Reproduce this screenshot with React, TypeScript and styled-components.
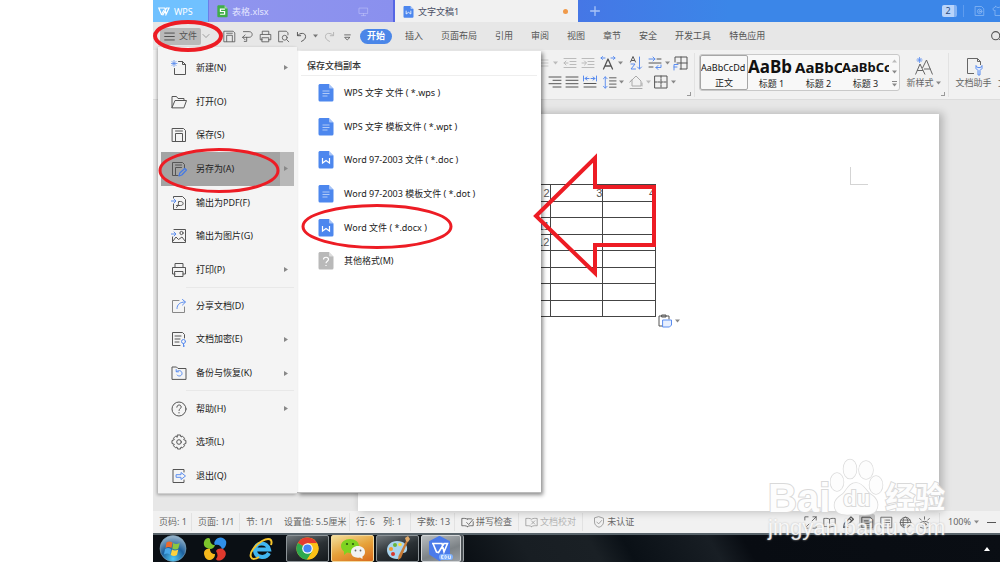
import React from "react";
import styled, { createGlobalStyle, css } from "styled-components";

const GlobalStyle = createGlobalStyle`
  * { box-sizing: border-box; }
  body {
    margin: 0;
    background: #fff;
    font-family: "Noto Sans", "Noto Sans CJK SC", sans-serif;
    font-size: 9px;
    line-height: 12px;
    color: #333;
    overflow: hidden;
  }
  button {
    font: inherit;
    color: inherit;
    border: 0;
    padding: 0;
    background: none;
    white-space: nowrap;
  }
  svg { display: block; flex: none; }
`;

const Screen = styled.div`
  padding-left: 153px;
`;

const Desktop = styled.div`
  position: relative;
  display: flex;
  flex-direction: column;
  min-height: 100vh;
  overflow: hidden;
`;

/* ---------- title bar ---------- */

const TitleBar = styled.header`
  display: flex;
  height: 22px;
  background: linear-gradient(90deg, #4b6ee4 40%, #3b86e8 68%);
  color: #fff;
`;

const TitleTab = styled.button<{ $width: number; $kind: "home" | "idle" | "active" }>`
  display: flex;
  align-items: center;
  gap: 4px;
  width: ${(p) => p.$width}px;
  padding: 1px 8px 0 8px;
  flex: none;
  ${(p) => p.$kind === "home" && css`background: #70c1ff; color: #fff; padding-left: 5px;`}
  ${(p) => p.$kind === "idle" && css`
    background: linear-gradient(90deg, #9095ee, #8a90ee);
    border-left: 1px solid #6a7ee8;
    border-right: 2px solid #5566e4;
    color: #e4e6ff;
  `}
  ${(p) => p.$kind === "active" && css`background: #f1f1f1; color: #4b4f66;`}
`;

const TabText = styled.span`
  flex: 1;
  text-align: left;
`;

const TabGap = styled.span`
  width: 12px;
`;

const UnsavedDot = styled.span`
  width: 5px;
  height: 5px;
  margin-right: 2px;
  border-radius: 50%;
  background: #f09a4a;
`;

const NewTab = styled.button`
  width: 34px;
  display: grid;
  place-items: center;
`;

const TitleTools = styled.div`
  display: flex;
  align-items: center;
  gap: 6px;
  margin-left: auto;
  margin-right: -4px;
`;

const TabCount = styled.button`
  width: 15px;
  height: 12px;
  border-right: 3px solid #86b4f3;
  border-radius: 2px;
  background: #b9d4fa;
  color: #2c4b7c;
`;

const TitleRule = styled.span`
  width: 1px;
  height: 12px;
  margin-right: 4px;
  background: #5f9cee;
`;

/* ---------- menu bar ---------- */

const MenuBar = styled.nav`
  display: flex;
  align-items: center;
  height: 28px;
  padding-left: 7px;
  background: #e7e7e7;
  color: #555;
`;

const FileButton = styled.button`
  display: flex;
  align-items: center;
  gap: 4px;
  width: 41px;
  height: 17px;
  padding-left: 4px;
  border-radius: 2px;
  background: #b9b9b9;
`;

const FileMore = styled.button`
  width: 16px;
`;

const QuickTools = styled.div`
  display: flex;
  align-items: center;
  gap: 5px;
  width: 159px;
  padding-left: 1px;
`;

const StartTab = styled.button`
  width: 32px;
  height: 15px;
  border-radius: 8px;
  background: #4a86e8;
  color: #fff;
  font-weight: 700;
`;

const MenuTabs = styled.div`
  display: flex;
  gap: 18px;
  margin-left: 13px;
`;

const SearchButton = styled.button`
  margin-left: auto;
  margin-right: -3px;
`;

/* ---------- ribbon ---------- */

const Ribbon = styled.section`
  display: flex;
  height: 50px;
  padding-left: 386px;
  background: #f1f1f1;
  border-bottom: 1px solid #dcdcdc;
  color: #666;
  overflow: hidden;
`;

const ParagraphGroup = styled.div`
  display: flex;
  flex-direction: column;
  gap: 3px;
  width: 154px;
  padding-top: 5px;
  flex: none;
`;

const ToolRow = styled.div<{ $start?: number }>`
  display: flex;
  align-items: center;
  gap: 2px;
  padding-left: ${(p) => p.$start ?? 0}px;
`;

const RibbonRule = styled.span`
  width: 1px;
  height: 44px;
  margin-top: 3px;
  background: #e2e2e2;
  flex: none;
`;

const Gallery = styled.div`
  display: flex;
  width: 201px;
  height: 37px;
  margin: 4px 0 0 4px;
  border: 1px solid #c9c9c9;
  border-radius: 3px;
  background: #f8f8f8;
  flex: none;
`;

const StyleCard = styled.button<{ $selected?: boolean }>`
  display: flex;
  flex-direction: column;
  align-items: center;
  justify-content: space-between;
  width: ${(p) => (p.$selected ? 48 : 47)}px;
  color: #222;
  overflow: hidden;
  ${(p) => p.$selected && css`border: 1px solid #a6a6a6; border-radius: 2px;`}
`;

const Sample = styled.span<{ $size: number; $bold?: boolean }>`
  height: 22px;
  line-height: 24px;
  width: 100%;
  overflow: hidden;
  text-align: left;
  color: #111;
  font-size: ${(p) => p.$size}px;
  font-weight: ${(p) => (p.$bold ? 700 : 400)};
`;

const GalleryArrows = styled.div`
  display: flex;
  flex-direction: column;
  justify-content: space-around;
  align-items: center;
  flex: 1;
`;

const BigTool = styled.button<{ $width: number }>`
  display: flex;
  flex-direction: column;
  align-items: center;
  justify-content: center;
  gap: 1px;
  width: ${(p) => p.$width}px;
  padding-bottom: 4px;
  flex: none;
`;

const NextTool = styled.button`
  align-self: flex-end;
  margin-bottom: 10px;
`;

const BigToolText = styled.span`
  display: flex;
  align-items: center;
  gap: 2px;
`;

const GroupCorner = styled.span`
  align-self: flex-end;
  width: 4px;
  height: 4px;
  margin: 0 3px 3px -6px;
  border-right: 1px solid #999;
  border-bottom: 1px solid #999;
  flex: none;
`;

/* ---------- document ---------- */

const Workspace = styled.main`
  display: flex;
  flex: 1;
  min-height: 411px;
  background: #e7e7e7;
`;

const Paper = styled.article`
  position: relative;
  flex: 1;
  margin: 14px 61px 0 205px;
  padding: 70px 70px 0 86px;
  background: #fff;
  box-shadow: 3px 0 8px 1px rgba(0, 0, 0, 0.22);
`;

const MarginCorner = styled.span`
  position: absolute;
  top: 53px;
  right: 71px;
  width: 18px;
  height: 18px;
  border-left: 1px solid #d4d4d4;
  border-bottom: 1px solid #d4d4d4;
`;

const DataTable = styled.table`
  width: 212px;
  height: 133px;
  table-layout: fixed;
  border-collapse: collapse;
  font: 11px/14px "Liberation Sans", sans-serif;
  color: #555;
  td {
    height: 16px;
    border: 1px solid #444;
    padding: 0;
    text-align: right;
  }
`;

const PasteOptions = styled.button`
  display: flex;
  align-items: center;
  gap: 2px;
  margin: -4px 0 0 213px;
`;

/* ---------- status bar ---------- */

const StatusBar = styled.footer`
  display: flex;
  align-items: center;
  height: 22px;
  padding: 0 4px 0 6px;
  background: #f1f1f1;
  color: #666;
  white-space: nowrap;
`;

const StatusItem = styled.span<{ $width: number; $rule?: boolean; $dim?: boolean }>`
  display: flex;
  align-items: center;
  gap: 2px;
  height: 18px;
  width: ${(p) => p.$width}px;
  margin-right: 6px;
  flex: none;
  border-right: ${(p) => (p.$rule ? "1px solid #e2e2e2" : "0")};
  color: ${(p) => (p.$dim ? "#b5b5b5" : "#666")};
`;

const ViewTools = styled.div`
  display: flex;
  align-items: center;
  gap: 3px;
  margin-left: auto;
`;

const ViewButton = styled.button<{ $on?: boolean }>`
  display: grid;
  place-items: center;
  width: 16px;
  height: 16px;
  border-radius: 2px;
  background: ${(p) => (p.$on ? "#c4c4c4" : "none")};
`;

const Zoom = styled.button`
  display: flex;
  align-items: center;
  gap: 3px;
  width: 45px;
  height: 18px;
  margin-left: 4px;
  padding-left: 8px;
  border-left: 1px solid #e2e2e2;
`;

/* ---------- taskbar ---------- */

const Taskbar = styled.footer`
  display: flex;
  align-items: center;
  gap: 2px;
  height: 29px;
  border-top: 2px solid #59646b;
  background: linear-gradient(60deg, #0a0f14 36%, #181e23 44%, #1a2025 52%, #0a1016 56%, #181e24 66%, #080c12 70%, #0a0e14);
`;

const Launcher = styled.button<{ $width: number }>`
  display: grid;
  place-items: center;
  width: ${(p) => p.$width}px;
  height: 27px;
`;

const TaskButton = styled.button<{ $look: "dark" | "orange" | "light" }>`
  display: grid;
  place-items: center;
  width: ${(p) => (p.$look === "light" ? 40 : 43)}px;
  height: 27px;
  border: 1px solid #8d9498;
  border-radius: 2px;
  ${(p) => p.$look === "dark" && css`background: linear-gradient(160deg, #70777b, #2b3135 50%, #14191d);`}
  ${(p) => p.$look === "orange" && css`background: linear-gradient(160deg, #f3df9a, #e6a23a 50%, #d96a1c); border-color: #f2d9a0;`}
  ${(p) => p.$look === "light" && css`background: linear-gradient(160deg, #b9bdc0, #7c8286 60%, #9ba0a4); border-color: #d2d5d7; box-shadow: 2px 0 0 #4c5256, 3px 0 0 #a0a5a8;`}
`;

const Tray = styled.button`
  margin-left: auto;
  margin-right: 10px;
`;

/* ---------- file menu ---------- */

const FileMenu = styled.div`
  position: absolute;
  z-index: 2;
  left: 5px;
  top: 47px;
  display: flex;
  flex-direction: column;
  width: 139px;
  height: 447px;
  padding: 4px 3px 0;
  background: #f4f4f4;
  border: solid #cfcfcf;
  border-width: 0 0 1px 0;
  box-shadow: -1px 1px 3px rgba(0, 0, 0, 0.3);
`;

const MenuRow = styled.button<{ $active?: boolean }>`
  display: flex;
  align-items: center;
  flex: 1;
  padding-left: 10px;
  color: #222;
  background: ${(p) => (p.$active ? "linear-gradient(90deg, #a3a3a3 119px, #b8b8b8 119px)" : "none")};
`;

const MenuLabel = styled.span`
  flex: 1;
  margin-left: 9px;
  text-align: left;
`;

const MenuArrow = styled.span`
  width: 10px;
  color: #888;
`;

const MenuRule = styled.hr`
  width: 108px;
  height: 2px;
  margin: 0 0 0 auto;
  border: 0;
  border-top: 1px solid #e8e8e8;
`;

const SaveAsMenu = styled.div`
  position: absolute;
  z-index: 1;
  left: 144px;
  top: 51px;
  width: 244px;
  height: 442px;
  background: #fff;
  border-bottom: 1px solid #bbb;
  box-shadow: 2px 2px 4px rgba(0, 0, 0, 0.45);
`;

const SaveAsTitle = styled.h2`
  margin: 0 4px;
  padding: 9px 0 3px 6px;
  border-bottom: 1px solid #eee;
  font-size: 9px;
  font-weight: 500;
  color: #333;
`;

const FormatList = styled.div`
  display: flex;
  flex-direction: column;
  height: 202px;
`;

const FormatRow = styled.button`
  display: flex;
  align-items: center;
  flex: 1;
  gap: 10px;
  padding-left: 21px;
  color: #222;
`;

/* ---------- overlays ---------- */

const Annotations = styled.svg`
  position: absolute;
  z-index: 3;
  left: 0;
  top: 0;
  pointer-events: none;
  overflow: visible;
`;

const Watermark = styled.div`
  position: absolute;
  z-index: 4;
  right: 53px;
  bottom: 22px;
  width: 179px;
  pointer-events: none;
  font-family: "Liberation Sans", "Noto Sans CJK SC", sans-serif;
  color: #fdfdfd;
  -webkit-text-stroke: 2px #d9d9d9;
  paint-order: stroke fill;
  white-space: nowrap;
`;

const Brand = styled.div`
  display: flex;
  align-items: flex-end;
  font-size: 40px;
  line-height: 36px;
  font-weight: 700;
`;

const Paw = styled.div`
  position: relative;
  width: 54px;
  height: 58px;
  margin-right: 1px;
`;

const PawText = styled.span`
  position: absolute;
  left: 13px;
  bottom: 5px;
  font-size: 22px;
  line-height: 24px;
`;

const BrandCjk = styled.span`
  font-size: 30px;
`;

const SiteName = styled.div`
  font-size: 22px;
  line-height: 24px;
  color: rgba(255, 255, 255, 0.85);
  -webkit-text-stroke: 0;
  text-shadow: 0 0 2px #bbb;
`;

/* ---------- drawings ---------- */

const B = "#5b8def";

type IconProps = { size?: number; color?: string; children: React.ReactNode };

const Icon = ({ size = 16, color = "#555", children }: IconProps) => (
  <svg width={size} height={size} viewBox="0 0 16 16" fill="none" stroke={color} strokeWidth="1" strokeLinecap="round" strokeLinejoin="round" aria-hidden="true">
    {children}
  </svg>
);

const Caret = ({ color = "#888" }: { color?: string }) => (
  <svg width="5" height="4" viewBox="0 0 5 4" aria-hidden="true"><path d="M0 .5h5L2.500 3.500z" fill={color} /></svg>
);

const floppy = <><path d="M1.500 1.500h11l2 2v11h-13z" /><path d="M4.500 14V6.500h7V14M4.500 4h7" /></>;
const printer = <><path d="M4 5V1.500h8V5M4 12H1.500V5.500h13V12H12" /><path d="M4 9.500h8v5H4z" /></>;

const menuIcons: Record<string, React.ReactNode> = {
  new: <><path d="M7.500 1.500h4l3 3v10h-11V8.500" /><path d="M11.500 1.500v3h3" /><path d="M3 .5v6M0 3.500h6M1 1.500l4 4M5 1.500l-4 4" stroke={B} strokeWidth=".8" /></>,
  open: <path d="M1 13.500v-11h4.500L7 4.500h6v2M1 13.500L4 6.500h11.500l-2.500 7z" />,
  save: floppy,
  saveAs: <><path d="M7 14.500H1.500v-13h10l2 2V7" /><path d="M4.500 14V6.500h6M4.500 4h6" /><path d="M8 15l.8-3 5-4.500 1.700 1.500-4.700 5z" stroke="#4379e6" strokeWidth="1.200" /></>,
  pdf: <><path d="M2.500 9v5.500h12v-10l-3-3h-9V3" /><path d="M5.500 12.500c2-1 2-3.500 2-6h2c3.500 0 3.500 4 0 4H5.500" /><path d="M0 6h4.500M3 4l2 2-2 2" stroke={B} /></>,
  image: <><path d="M3 1.500h11.500v13h-13V9M2 13l3-4 2.500 2.500L11 9l3 4" /><circle cx="10.500" cy="5" r="1.600" /><path d="M0 6h4.500M3 4l2 2-2 2" stroke={B} /></>,
  print: printer,
  share: <><path d="M8 2.500H1.500v12h12V9" stroke="#888" /><path d="M6 10.500c0-4 3-6.500 8-6.500M11.500 1.500L14.500 4l-3 3" stroke={B} /></>,
  lock: <><path d="M9 14.500H1.500v-13h10l2 2V7M4 5h6M4 8h5M4 11h4" /><circle cx="12.500" cy="10.500" r="2" stroke={B} /><path d="M12.500 12.500v3M12.500 15h1" stroke={B} /></>,
  backup: <><path d="M1 14V2h4.500L7 3.500h8V14z" /><path d="M5.500 6.500c3-2 5.500-.5 5.500 2s-3.500 3.500-5 1.500M5.200 4.500v2.300h2.300" stroke={B} /></>,
  help: <><circle cx="8" cy="8" r="7" /><path d="M5.800 6.200c0-3 4.400-3 4.400-.2 0 1.600-2.200 1.700-2.200 3.500M8 11.500v.5" /></>,
  options: <><circle cx="8" cy="8" r="2.300" /><path d="M6.500 1h3l.5 2 1.500-.8 2 2-.8 1.500 2.200.8v3l-2.200.8.8 1.500-2 2-1.500-.8-.5 2h-3L6 13l-1.500.8-2-2 .8-1.500L1 9.500v-3l2.300-.8-.8-1.500 2-2L6 3z" /></>,
  exit: <><path d="M13 4V1.500H2v13h11V12" /><path d="M5.500 6.700H10V4.500L14.500 8 10 11.500V9.300H5.500z" stroke={B} /></>,
};

const DocIcon = ({ kind, w = 16, h = 18 }: { kind: "lines" | "w" | "unknown" | "s"; w?: number; h?: number }) => (
  <svg width={w} height={h} viewBox="0 0 16 18" aria-hidden="true">
    <path d="M1.500 0H11l4.500 4.500V16a1.500 1.500 0 0 1-1.500 1.500H2A1.500 1.500 0 0 1 .5 16V1z" fill={kind === "unknown" ? "#b9b9b9" : kind === "s" ? "#3fae49" : "#4d87ee"} />
    <path d="M11 0l4.500 4.500H12a1 1 0 0 1-1-1z" fill="#fff" opacity=".5" />
    <g fill="none" stroke="#fff" strokeWidth="1.200">
      {kind === "lines" && <path d="M4.500 7h7M4.500 9.500h7M4.500 12h5" strokeWidth=".8" opacity=".7" />}
      {kind === "w" && <path d="M4.500 7v5L8 9.500l3.500 2.500V7" />}
      {kind === "unknown" && <path d="M5.500 7.500c0-3 5-3 5 0 0 1.700-2.500 1.800-2.500 3.800M8 13v1" />}
      {kind === "s" && <path d="M11.500 5.500H5v3.500h6v4H4.500" strokeWidth="1.800" />}
    </g>
  </svg>
);

const menu: { id: string; label: string; sub?: boolean; rule?: boolean }[] = [
  { id: "new", label: "新建(N)", sub: true },
  { id: "open", label: "打开(O)" },
  { id: "save", label: "保存(S)" },
  { id: "saveAs", label: "另存为(A)", sub: true },
  { id: "pdf", label: "输出为PDF(F)" },
  { id: "image", label: "输出为图片(G)" },
  { id: "print", label: "打印(P)", sub: true },
  { id: "share", label: "分享文档(D)", rule: true },
  { id: "lock", label: "文档加密(E)", sub: true },
  { id: "backup", label: "备份与恢复(K)", sub: true },
  { id: "help", label: "帮助(H)", sub: true, rule: true },
  { id: "options", label: "选项(L)" },
  { id: "exit", label: "退出(Q)" },
];

const formats: { kind: "lines" | "w" | "unknown"; label: string }[] = [
  { kind: "lines", label: "WPS 文字 文件 ( *.wps )" },
  { kind: "lines", label: "WPS 文字 模板文件 ( *.wpt )" },
  { kind: "w", label: "Word 97-2003 文件 ( *.doc )" },
  { kind: "lines", label: "Word 97-2003 模板文件 ( *.dot )" },
  { kind: "w", label: "Word 文件 ( *.docx )" },
  { kind: "unknown", label: "其他格式(M)" },
];

const tabs = ["插入", "页面布局", "引用", "审阅", "视图", "章节", "安全", "开发工具", "特色应用"];

const cells = [
  ["", "2", "3", "4"],
  ["", "", "", ""],
  ["", "11", "", ""],
  ["", "12", "", ""],
  ["", "", "", ""],
  ["", "", "", ""],
  ["", "", "", ""],
  ["", "", "", ""],
];

const indent = (flip: boolean) => (
  <><path d="M2 3.500h12M8 6.500h6M8 9.500h6M2 12.500h12" /><path d={flip ? "M2 8h4M4.500 6L6.500 8l-2 2" : "M6 8H2M4 6L2 8l2 2"} /></>
);

export default function App() {
  return (
    <>
      <GlobalStyle />
      <Screen>
        <Desktop>
          <TitleBar>
            <TitleTab $width={55} $kind="home">
              <svg width="12" height="9" viewBox="0 0 12 9" fill="none" stroke="#fff" strokeWidth="1.200"><path d="M.8 1h6L8 7.500 11 1H8.500L5 7.800 3.500 7.500z" /><path d="M3.500 7.500L6 3" /></svg>
              WPS
            </TitleTab>
            <TitleTab $width={187} $kind="idle">
              <DocIcon kind="s" w={11} h={13} />
              <TabText>表格.xlsx</TabText>
              <Icon size={11} color="#b9bdf7"><path d="M2 3h12v8H2zM8 11v3M5 14h6" /></Icon>
              <TabGap />
            </TitleTab>
            <TitleTab $width={183} $kind="active">
              <DocIcon kind="w" w={11} h={12} />
              <TabText>文字文稿1</TabText>
              <UnsavedDot />
            </TitleTab>
            <NewTab aria-label="新建标签"><Icon size={14} color="#a9c4f7"><path d="M8 3v10M3 8h10" strokeWidth="1.500" /></Icon></NewTab>
            <TitleTools>
              <TabCount>2</TabCount>
              <TitleRule />
              <Icon size={12} color="#8db9f4"><path d="M2 2h8l3 3v9H2z" /><circle cx="7.500" cy="8.500" r="3" /><circle cx="7.500" cy="8.500" r="1" /></Icon>
              <Icon size={12} color="#8db9f4"><path d="M5 2L1 5l2 3 1-1v7h8V7l1 1 2-3-4-3c-1 2-5 2-6 0z" /></Icon>
            </TitleTools>
          </TitleBar>

          <MenuBar>
            <FileButton>
              <Icon size={11} color="#444"><path d="M1 3h14M1 8h14M1 13h14" strokeWidth="1.300" /></Icon>
              文件
            </FileButton>
            <QuickTools>
              <FileMore aria-label="更多"><Icon size={8}><path d="M2 5l6 6 6-6" /></Icon></FileMore>
              <Icon size={13}>{floppy}</Icon>
              <Icon size={13}><path d="M3 2h7c5 0 5 7 0 7H2M5 6L2 9l3 3M7 9v5H4" /></Icon>
              <Icon size={13}>{printer}</Icon>
              <Icon size={13}><path d="M7 14.500H2v-13h9.500l2 2V6" /><circle cx="9.500" cy="9.500" r="3" /><path d="M12 12l2.500 2.500" /></Icon>
              <Icon size={13}><path d="M3 3v4h4M3 7c3-4 10-4 10 1 0 3-2 4.500-5 6" strokeWidth="1.200" /></Icon>
              <Caret color="#777" />
              <Icon size={13} color="#b5b5b5"><path d="M13 3v4H9M13 7C10 3 3 3 3 8c0 3 2 4.500 5 6" strokeWidth="1.200" /></Icon>
              <Icon size={13}><path d="M4.500 6h7M5 9h6l-3 3z" /></Icon>
            </QuickTools>
            <StartTab>开始</StartTab>
            <MenuTabs>{tabs.map((t) => <button key={t}>{t}</button>)}</MenuTabs>
            <SearchButton aria-label="搜索"><Icon size={13}><circle cx="7" cy="7" r="5" strokeWidth="1.300" /><path d="M11 11l4 4" /></Icon></SearchButton>
          </MenuBar>

          <Ribbon>
            <ParagraphGroup>
              <ToolRow>
                <Icon size={12} color="#bbb"><path d="M0 4h12M0 8h12M0 12h12" /></Icon>
                <Caret color="#bbb" /><span />
                <Icon size={16} color="#bbb">{indent(false)}</Icon>
                <Icon size={16} color="#bbb">{indent(true)}</Icon>
                <span />
                <Icon><path d="M3.500 14L8 4l4.500 10M5 11h6" strokeWidth="1.300" /><path d="M1 3h4M2.500 1.500L1 3l1.500 1.500M11 3h4M13.500 1.500L15 3l-1.500 1.500" stroke={B} /></Icon>
                <Caret />
                <span />
                <Icon><path d="M3.500 7L6 1.500 8.500 7M4.500 5.500h3" /><path d="M4 9h4l-4 5h4.500M12.500 2v12M10.500 12l2 2 2-2" stroke={B} /></Icon>
                <span />
                <Icon><path d="M2 8h12M10 4h4M2 12h4" /><path d="M2 4h6M6 2l2 2-2 2M14 10v2.500H9M11 10.500L9 12.500l2 2" stroke={B} /></Icon>
                <Caret />
                <Icon><path d="M3 7V2h12v12H8M9 2v12M5 8h10" /><path d="M2 15V9.500h4M2 12h3" stroke={B} /></Icon>
              </ToolRow>
              <ToolRow $start={7}>
                <Icon><path d="M3 3h12M7 6.300h8M3 9.700h12M7 13h8" /></Icon>
                <Icon><path d="M2 3h12M2 6.300h12M2 9.700h12M2 13h12" /></Icon>
                <Icon><path d="M2 9.500h12M2 13h12" /><path d="M1.500 2v5M14.500 2v5M3 4.500h4M5 3L3 4.500 5 6M9 4.500h4M11 3l2 1.500L11 6" stroke={B} /></Icon>
                <span />
                <Icon size={15}><path d="M8 3h7M8 6.300h7M8 9.700h7M8 13h7" /><path d="M3.500 2v12M1.500 4l2-2 2 2M1.500 12l2 2 2-2" stroke={B} /></Icon>
                <Caret />
                <span />
                <Icon color="#aaa"><path d="M2 8l6-6 5 5v5H4L4 6zM2 14.500h12M14 9v3" /></Icon>
                <Caret color="#bbb" />
                <Icon><path d="M2 2h12v12H2z" /><path d="M8 2v12M2 8h12" strokeDasharray="2 1" /></Icon>
                <Caret />
              </ToolRow>
            </ParagraphGroup>
            <GroupCorner />
            <RibbonRule />
            <Gallery>
              <StyleCard $selected><Sample $size={9}>AaBbCcDd</Sample>正文</StyleCard>
              <StyleCard><Sample $size={17} $bold>AaBb</Sample>标题 1</StyleCard>
              <StyleCard><Sample $size={15} $bold>AaBbC</Sample>标题 2</StyleCard>
              <StyleCard><Sample $size={13} $bold>AaBbCc</Sample>标题 3</StyleCard>
              <GalleryArrows>
                <svg width="5" height="4" viewBox="0 0 5 4"><path d="M0 3.500h5L2.500.5z" fill="#bbb" /></svg>
                <Caret />
                <svg width="5" height="6" viewBox="0 0 5 6"><path d="M0 .5h5" stroke="#888" /><path d="M0 2.500h5L2.500 5.500z" fill="#888" /></svg>
              </GalleryArrows>
            </Gallery>
            <BigTool $width={47}>
              <svg width="20" height="19" viewBox="0 0 20 19" fill="none" stroke="#666"><path d="M1.500 17.500L6 7l5 10.500M3 13.500h6M8.500 11L12.500 3l6 14.500M10 12h6.500" /><path d="M5.500 0v6M2.500 3h6M3.500 1l4 4M7.500 1l-4 4" stroke={B} strokeWidth=".8" /></svg>
              <BigToolText>新样式<Caret /></BigToolText>
            </BigTool>
            <GroupCorner />
            <RibbonRule />
            <BigTool $width={49}>
              <svg width="18" height="19" viewBox="0 0 18 19" fill="none" stroke="#666"><path d="M9 16.500H2.500v-15h10l3 3V8M12.500 1.500v3h3" /><path d="M11 8.500v3l2 2v4.500h2v-4.500l2-2v-3l-1.500 2h-3z" stroke={B} fill="#dce8ff" /></svg>
              文档助手
            </BigTool>
            <NextTool>文</NextTool>
          </Ribbon>

          <Workspace>
            <Paper>
              <MarginCorner />
              <DataTable>
                <tbody>
                  {cells.map((row, r) => (
                    <tr key={r}>{row.map((c, i) => <td key={i}>{c}</td>)}</tr>
                  ))}
                </tbody>
              </DataTable>
              <PasteOptions aria-label="粘贴选项">
                <Icon><path d="M6 13H2V3h10v3M5 2h4v2H5z" /><path d="M6 7h8.500v5l-2 2H6z" stroke={B} fill="#e8f0ff" /></Icon>
                <Caret />
              </PasteOptions>
            </Paper>
          </Workspace>

          <StatusBar>
            <StatusItem $width={33} $rule>页码: 1</StatusItem>
            <StatusItem $width={42} $rule>页面: 1/1</StatusItem>
            <StatusItem $width={32}>节: 1/1</StatusItem>
            <StatusItem $width={66} $rule>设置值: 5.5厘米</StatusItem>
            <StatusItem $width={21}>行: 6</StatusItem>
            <StatusItem $width={28} $rule>列: 1</StatusItem>
            <StatusItem $width={38} $rule>字数: 13</StatusItem>
            <StatusItem $width={58} $rule><Icon size={13}><path d="M8 13c-2-1.500-5-1-7-1V3c2 0 5-.5 7 1M8 13c2-1.500 5-1 7-1V7M8 3.500h5M7 8l2.500 2.500L15 4" /></Icon>拼写检查</StatusItem>
            <StatusItem $width={58} $rule $dim><Icon size={13} color="#999"><path d="M8 13c-2-1.500-5-1-7-1V3c2 0 5-.5 7 1 2-1.500 5-1 7-1v9c-2 0-5-.5-7 1M8 6l4 4M12 6l-4 4" /></Icon>文档校对</StatusItem>
            <StatusItem $width={50}>&nbsp;<Icon size={12} color="#888"><path d="M8 1l6 2v5c0 4-3 6-6 7-3-1-6-3-6-7V3zM5 8l2.500 2.500L11.500 6" /></Icon>未认证</StatusItem>
            <ViewTools>
              <ViewButton aria-label="全屏"><Icon size={13}><path d="M1 5V1h4M15 11v4h-4M1 11v4h4M10 6l5-5M11 1h4v4M3 13l3-3" /></Icon></ViewButton>
              <ViewButton aria-label="阅读"><Icon size={13}><path d="M8 14c-2-1.500-4-1-7-1V3c3 0 5-.5 7 1 2-1.500 4-1 7-1v10c-3 0-5-.5-7 1zM8 4v10" /></Icon></ViewButton>
              <ViewButton aria-label="书写"><Icon size={13}><path d="M2 14l1-5 8-8 3 3-8 8zM9 3l3 3M2 14h5" strokeWidth="1.500" /></Icon></ViewButton>
              <ViewButton $on aria-label="页面视图"><Icon size={13} color="#333"><path d="M1.500 1.500h10l3 3v10h-13zM4 6h5M4 9h8M4 12h8" /></Icon></ViewButton>
              <ViewButton aria-label="大纲"><Icon size={13}><path d="M1.500 1.500h13v13h-13zM4 5h1M7 5h5M4 8h1M7 8h5M4 11h1M7 11h5" /></Icon></ViewButton>
              <ViewButton aria-label="网页"><Icon size={13}><circle cx="8" cy="8" r="6.500" /><ellipse cx="8" cy="8" rx="3" ry="6.500" /><path d="M1.500 8h13M2.500 5h11M2.500 11h11" /></Icon></ViewButton>
              <ViewButton aria-label="护眼"><Icon size={13}><path d="M1 11c3-6 11-6 14 0M2 3l2 2M8 1v3M14 3l-2 2M3 14c3 1.500 7 1.500 10 0" /><circle cx="8" cy="10.500" r="2" /></Icon></ViewButton>
              <Zoom>100%<Caret /></Zoom>
              <Icon size={9}><path d="M0 8h16" strokeWidth="2" /></Icon>
            </ViewTools>
          </StatusBar>

          <Taskbar>
            <Launcher $width={40} aria-label="开始菜单">
              <svg width="28" height="27" viewBox="0 0 28 27">
                <defs><radialGradient id="orb" cx=".5" cy=".9" r=".9"><stop offset="0" stopColor="#4fc9f5" /><stop offset=".5" stopColor="#1d5f9c" /><stop offset="1" stopColor="#9fb9cc" /></radialGradient></defs>
                <circle cx="14" cy="13.500" r="13" fill="url(#orb)" stroke="#7fa6bd" strokeWidth=".6" />
                <path d="M7.500 7.500c2-1.500 4-1.500 6 0l-1 5.500c-2-1.200-4-1.200-6 0z" fill="#ee6a2b" />
                <path d="M14.200 8c2 1.200 4 1.200 6.500 0l-1.300 5.500c-2 1.200-4 1.200-6.200 0z" fill="#8cc63f" />
                <path d="M6 14c2-1.200 4-1.200 6 0l-1 5.500c-2-1.500-4-1.500-6 0z" fill="#48a7e8" />
                <path d="M13 14.500c2 1.200 4 1.200 6.300 0L18 20c-2 1.200-4 1.200-6.300 0z" fill="#ffd23d" />
              </svg>
            </Launcher>
            <Launcher $width={40} aria-label="工具">
              <svg width="24" height="24" viewBox="0 0 24 24">
                <path d="M1 5c1-4 5-5 6-3 0 4 2 6 5 6-1 4-5 5-8 3-3-1-3.500-4-3-6z" fill="#7cc42c" />
                <path d="M12 4c3-5 9-4 11 0 1 3-1 8-4 8-1-3-3-5-7-4-1-1-1-3 0-4z" fill="#2f8fe8" />
                <path d="M1 16c0-3 3-5 6-4 0 3 2 5 5 5 0 4-3 6-6 6-3 0-5-4-5-7z" fill="#f5b81c" />
                <path d="M13 14c2-3 6-3 8-1 3 2 2 7-1 9-3 2-6 2-7 0 2-2 2-5 0-8z" fill="#e0392d" />
              </svg>
            </Launcher>
            <Launcher $width={47} aria-label="浏览器">
              <svg width="26" height="26" viewBox="0 0 26 26" fill="none">
                <path d="M21 17c-3 6-14 5-14-3S19 5 21 13.500H9" stroke="#41b6f0" strokeWidth="4" />
                <path d="M23 9c2-6-2-8-9-4C7 9 1 17 3 21c1 3 5 2 8 0" stroke="#f6c52c" strokeWidth="2" />
              </svg>
            </Launcher>
            <TaskButton $look="dark" aria-label="Chrome">
              <svg width="23" height="23" viewBox="0 0 24 24">
                <circle cx="12" cy="12" r="11.500" fill="#fbc116" />
                <path d="M12 12L2 6.200A11.500 11.500 0 0 1 22 6.500H12z" fill="#e33b2e" />
                <path d="M12 12L2 6.200A11.500 11.500 0 0 0 11.500 23.500L17 15z" fill="#2da94f" />
                <path d="M12 6.500h10a11.500 11.500 0 0 1-10.500 17L17 15z" fill="#fbc116" />
                <circle cx="12" cy="12" r="5.500" fill="#fff" /><circle cx="12" cy="12" r="4.300" fill="#4384f3" />
              </svg>
            </TaskButton>
            <TaskButton $look="orange" aria-label="微信">
              <svg width="26" height="22" viewBox="0 0 26 22">
                <path d="M10 1c5 0 9 3 9 7s-4 7-9 7l-3-.5L4 17v-3.500C2 12 1 10 1 8c0-4 4-7 9-7z" fill="#7ed321" />
                <circle cx="7" cy="6" r="1.100" fill="#2b5a10" /><circle cx="13" cy="6" r="1.100" fill="#2b5a10" />
                <path d="M18 8c4 0 7 2.500 7 6 0 2-1 3.500-2.500 4.500V21L20 19.500c-5 1-9-1.500-9-5.500 0-3.500 3-6 7-6z" fill="#f2f2f2" />
                <circle cx="15.500" cy="12.500" r=".9" fill="#666" /><circle cx="20.500" cy="12.500" r=".9" fill="#666" />
              </svg>
            </TaskButton>
            <TaskButton $look="dark" aria-label="画图">
              <svg width="26" height="25" viewBox="0 0 26 25">
                <path d="M12 5c7 0 11 4 10 9-1 4-4 2-6 4s0 5-4 5C6 23 2 19 2 14s4-9 10-9z" fill="#a9d4ee" />
                <circle cx="6" cy="13" r="2" fill="#f29a2e" /><circle cx="10" cy="9" r="2" fill="#67b53a" /><circle cx="8" cy="18" r="2" fill="#d7362c" /><circle cx="15" cy="8.500" r="1.800" fill="#ffdc3d" />
                <path d="M22 3l1.500 1L16 22l-3 2 .5-4z" fill="#c77a35" /><path d="M20 2l3-2 2 3-2 3-2-1z" fill="#e0aa6b" />
              </svg>
            </TaskButton>
            <TaskButton $look="light" aria-label="WPS EDU">
              <svg width="26" height="25" viewBox="0 0 26 25">
                <path d="M11.500 1L21 6v12l-9.500 6L2 18V6z" fill="#4b7bea" stroke="#4b7bea" strokeWidth="2" strokeLinejoin="round" />
                <path d="M4 7.500h10l2 8.500 3.500-8.500H16l-5.500 9-2-.5L5 7.500" fill="none" stroke="#fff" strokeWidth="1.600" />
                <rect x="11" y="18" width="14" height="6" rx="3" fill="#7fb0fb" />
                <path d="M15.500 19.500h-2v3h2M13.500 21h1.500M17 19.500v3c2.500 0 2.500-3 0-3zM20.500 19.500v3h2v-3" fill="none" stroke="#fff" strokeWidth=".7" />
              </svg>
            </TaskButton>
            <Tray aria-label="显示隐藏的图标"><svg width="6" height="4" viewBox="0 0 6 4"><path d="M0 4l3-4 3 4z" fill="#fff" /></svg></Tray>
          </Taskbar>

          <FileMenu role="menu">
            {menu.map((m) => (
              <React.Fragment key={m.id}>
                {m.rule && <MenuRule />}
                <MenuRow role="menuitem" $active={m.id === "saveAs"}>
                  <Icon>{menuIcons[m.id]}</Icon>
                  <MenuLabel>{m.label}</MenuLabel>
                  {m.sub && <MenuArrow><svg width="4" height="5" viewBox="0 0 4 5"><path d="M0 0l4 2.500L0 5z" fill="#888" /></svg></MenuArrow>}
                </MenuRow>
              </React.Fragment>
            ))}
          </FileMenu>

          <SaveAsMenu role="menu">
            <SaveAsTitle>保存文档副本</SaveAsTitle>
            <FormatList>
              {formats.map((f) => (
                <FormatRow key={f.label} role="menuitem"><DocIcon kind={f.kind} />{f.label}</FormatRow>
              ))}
            </FormatList>
          </SaveAsMenu>

          <Annotations width="520" height="290" viewBox="0 0 520 290" fill="none" stroke="#ed1c24" strokeWidth="4">
            <ellipse cx="35" cy="36" rx="33" ry="14" />
            <ellipse cx="66" cy="170.500" rx="59" ry="21" strokeWidth="3" />
            <ellipse cx="224" cy="226.500" rx="74" ry="21" strokeWidth="3" />
            <path d="M383 216L442 158V187H501V245H442V273z" />
          </Annotations>

          <Watermark>
            <Brand>
              Bai
              <Paw>
                <svg width="54" height="58" viewBox="0 0 54 58" fill="#fdfdfd" stroke="#dcdcdc" strokeWidth="1.500">
                  <ellipse cx="7" cy="24" rx="6.500" ry="9" /><ellipse cx="20" cy="11" rx="6.500" ry="9.500" />
                  <ellipse cx="36" cy="12" rx="7" ry="9" /><ellipse cx="46" cy="27" rx="6.500" ry="9" />
                  <path d="M26 25c7 0 9 7 14 11 5 3 9 8 7 14-2 8-13 7-21 6-8 1-19 2-21-6-2-6 3-11 8-14 4-4 6-11 13-11z" />
                </svg>
                <PawText>du</PawText>
              </Paw>
              <BrandCjk>经验</BrandCjk>
            </Brand>
            <SiteName>jingyan.baidu.com</SiteName>
          </Watermark>
        </Desktop>
      </Screen>
    </>
  );
}
